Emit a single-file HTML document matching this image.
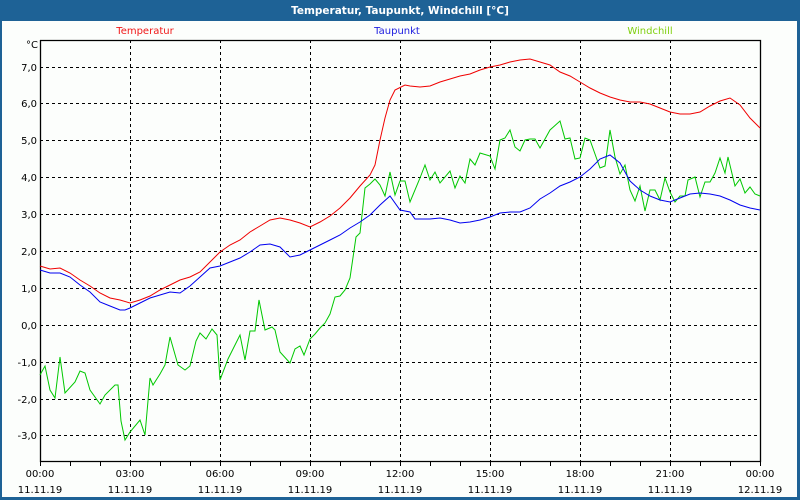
<!DOCTYPE html>
<html><head><meta charset="utf-8"><style>
html,body{margin:0;padding:0;width:800px;height:500px;overflow:hidden;background:#1e6296}
svg{display:block}
text{font-family:"DejaVu Sans","Liberation Sans",sans-serif;font-size:10px}
</style></head><body>
<svg width="800" height="500" xmlns="http://www.w3.org/2000/svg">
<rect x="0" y="0" width="800" height="500" fill="#1e6296"/>
<rect x="2" y="21" width="795" height="476" fill="#fcfefc"/>
<text x="400" y="14" text-anchor="middle" fill="#fff" font-weight="bold" style="font-size:10.5px">Temperatur, Taupunkt, Windchill [°C]</text>
<text x="145" y="34" text-anchor="middle" fill="#f01818">Temperatur</text>
<text x="397" y="34" text-anchor="middle" fill="#2020e0">Taupunkt</text>
<text x="650" y="34" text-anchor="middle" fill="#80d010">Windchill</text>
<g stroke="#000" stroke-dasharray="3,3" stroke-width="1">
<path d="M130.5 40V461M220.5 40V461M310.5 40V461M400.5 40V461M490.5 40V461M580.5 40V461M670.5 40V461"/>
<path d="M40 67.5H760M40 103.5H760M40 140.5H760M40 177.5H760M40 214.5H760M40 251.5H760M40 288.5H760M40 325.5H760M40 362.5H760M40 399.5H760M40 435.5H760"/>
</g>
<path d="M40.5 40V461.5H760.5V40.5H40" stroke="#000" fill="none" stroke-width="1.3"/>
<path stroke="#000" d="M70.5 461v5M100.5 461v5M130.5 461v5M160.5 461v5M190.5 461v5M220.5 461v5M250.5 461v5M280.5 461v5M310.5 461v5M340.5 461v5M370.5 461v5M400.5 461v5M430.5 461v5M460.5 461v5M490.5 461v5M520.5 461v5M550.5 461v5M580.5 461v5M610.5 461v5M640.5 461v5M670.5 461v5M700.5 461v5M730.5 461v5M760.5 461v5M40.5 461v5"/>
<g fill="#000" text-anchor="end">
<text x="38" y="48">°C</text>
<text x="37" y="71">7,0</text><text x="37" y="107">6,0</text><text x="37" y="144">5,0</text><text x="37" y="181">4,0</text><text x="37" y="218">3,0</text><text x="37" y="255">2,0</text><text x="37" y="292">1,0</text><text x="37" y="329">0,0</text><text x="37" y="366">-1,0</text><text x="37" y="403">-2,0</text><text x="37" y="439">-3,0</text>
</g>
<g fill="#000" text-anchor="middle">
<text x="40" y="477">00:00</text><text x="130" y="477">03:00</text><text x="220" y="477">06:00</text><text x="310" y="477">09:00</text><text x="400" y="477">12:00</text><text x="490" y="477">15:00</text><text x="580" y="477">18:00</text><text x="670" y="477">21:00</text><text x="760" y="477">00:00</text>
<text x="40" y="493">11.11.19</text><text x="130" y="493">11.11.19</text><text x="220" y="493">11.11.19</text><text x="310" y="493">11.11.19</text><text x="400" y="493">11.11.19</text><text x="490" y="493">11.11.19</text><text x="580" y="493">11.11.19</text><text x="670" y="493">11.11.19</text><text x="760" y="493">12.11.19</text>
</g>
<polyline fill="none" stroke="#00c800" stroke-width="1" points="40,375 45,366 50,390 55,398 60,357 65,393 75,382 80,371 85,373 90,390 100,404 105,395 115,385 118,385 121,421 125,440 130,432 140,420 145,435 150,378 153,385 160,374 165,365 170,337 178,365 185,370 190,366 196,341 200,333 206,339 212,329 217,335 220,380 228,359 240,335 245,360 250,331 255,331 259,300 265,330 272,327 275,330 280,352 290,363 295,349 300,346 304,355 310,339 315,334 320,328 325,323 330,314 335,297 340,296 345,290 350,278 356,237 360,233 365,188 370,184 375,179 380,185 385,196 390,172 395,195 400,181 405,181 410,202 420,178 425,165 430,180 435,172 440,183 450,171 455,188 460,176 465,183 470,159 475,165 480,153 490,156 495,169 500,140 505,138 510,130 515,147 520,151 525,140 530,139 535,139 540,148 550,130 560,121 565,139 570,138 575,159 580,158 585,138 590,140 600,168 605,166 610,130 615,157 620,174 625,165 630,190 635,201 640,186 645,211 650,190 655,190 660,200 665,178 670,192 675,202 680,196 685,196 688,180 695,177 700,197 705,182 710,182 715,173 720,158 725,173 728,157 735,186 740,179 745,193 750,187 755,194 760,196"/>
<polyline fill="none" stroke="#0000f0" stroke-width="1" points="40,270 50,273 60,273 70,277 80,285 90,292 100,302 110,306 120,310 125,310 130,308 140,303 150,298 160,295 170,292 180,293 190,286 200,277 210,268 220,266 230,262 240,258 250,252 260,245 270,244 280,247 290,257 300,255 310,250 320,245 330,240 340,235 350,228 360,222 370,215 380,205 390,196 400,210 410,212 415,219 420,219 430,219 440,218 450,220 460,223 470,222 480,220 490,217 500,213 510,212 520,212 530,208 540,199 550,193 560,186 570,182 580,177 590,169 600,159 610,155 620,163 630,181 640,190 650,196 660,200 670,202 680,198 690,194 700,193 710,194 720,196 730,200 740,205 750,208 760,210"/>
<polyline fill="none" stroke="#f00000" stroke-width="1" points="40,266 50,269 60,268 70,273 80,280 90,286 100,293 110,298 120,300 130,303 140,300 150,296 160,290 170,285 180,280 190,277 200,272 210,262 220,252 230,245 240,240 250,232 260,226 270,220 280,218 290,220 300,223 310,227 320,222 330,216 340,208 350,198 360,186 370,175 375,165 380,140 385,118 390,100 395,90 405,85 410,86 420,87 430,86 440,82 450,79 460,76 470,74 480,70 490,67 500,65 510,62 520,60 530,59 540,62 550,65 560,72 570,76 580,82 590,88 600,93 610,97 620,100 630,102 640,102 650,104 660,108 670,112 680,114 690,114 700,112 710,106 720,101 730,98 740,105 750,118 760,128"/>
</svg>
</body></html>
